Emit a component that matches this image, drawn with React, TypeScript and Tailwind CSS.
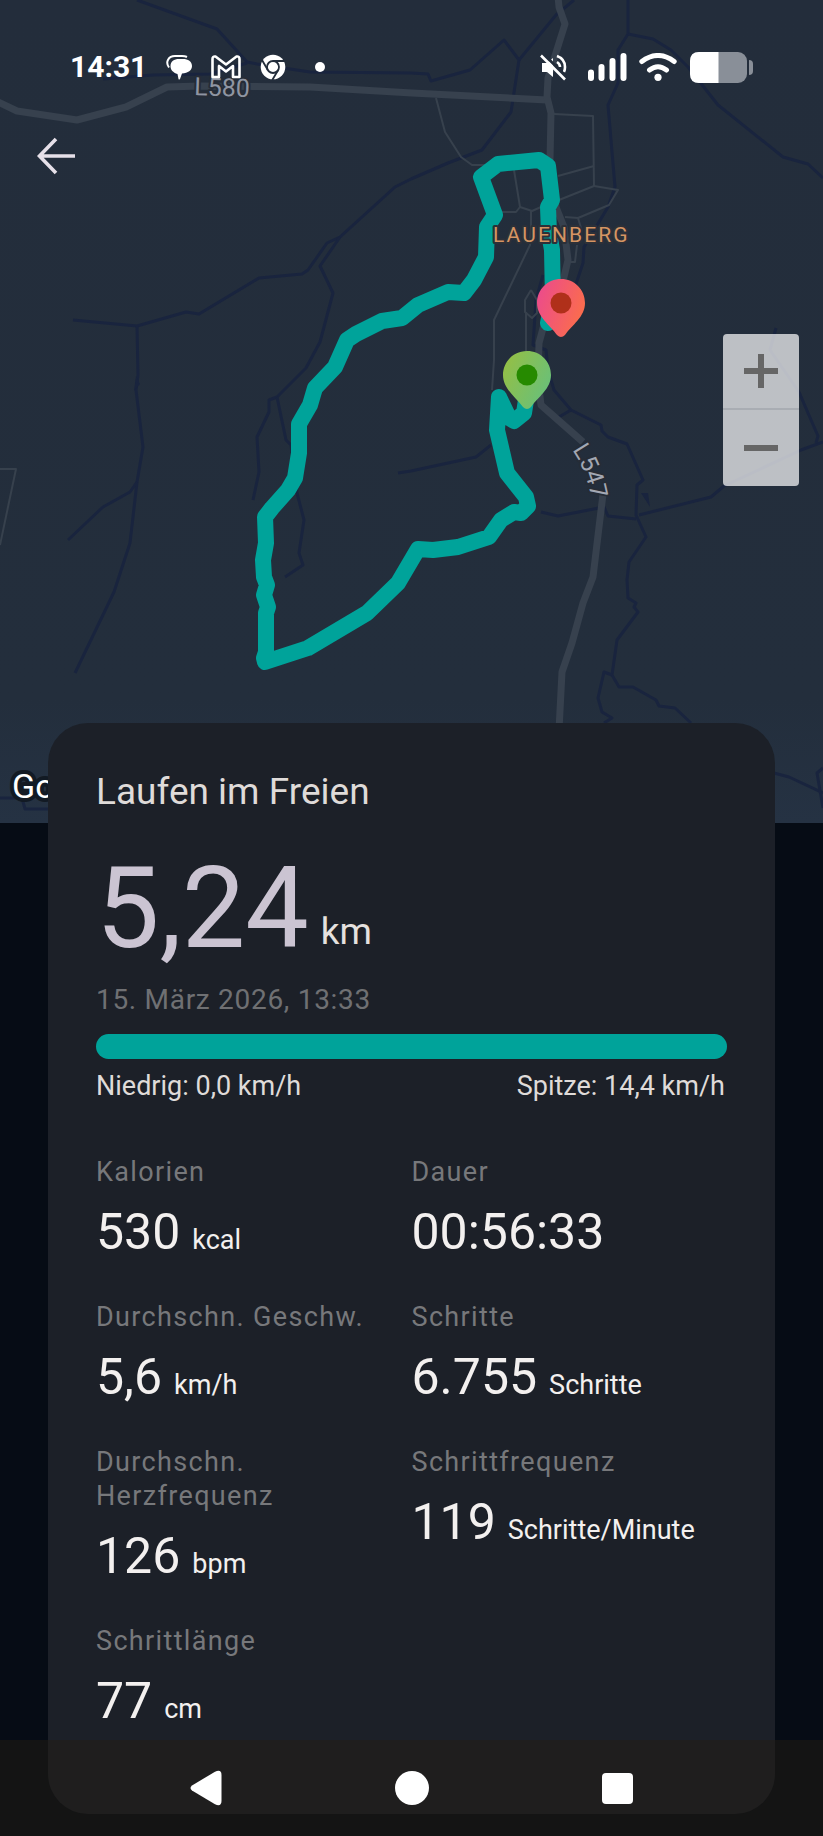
type Metric = {
  label: string;
  value: string;
  unit?: string;
};

const metrics: Metric[] = [
  { label: "Kalorien", value: "530", unit: "kcal" },
  { label: "Dauer", value: "00:56:33" },
  { label: "Durchschn. Geschw.", value: "5,6", unit: "km/h" },
  { label: "Schritte", value: "6.755", unit: "Schritte" },
  { label: "Durchschn. Herzfrequenz", value: "126", unit: "bpm" },
  { label: "Schrittfrequenz", value: "119", unit: "Schritte/Minute" },
  { label: "Schrittlänge", value: "77", unit: "cm" },
];

const waterways = [
  "137,0 217,29 247,62 257,64 310,72 411,73 428,74 431,81 470,70 504,40 519,60 511,112 482,150 448,163 411,179 395,187 340,237 327,243 308,270 302,274 259,278 199,314 186,312 137,326 73,320",
  "519,60 556,15 574,0",
  "103,79 153,75 210,74 247,63",
  "340,237 320,266 333,293 320,342 306,368 277,397 269,400 269,412 257,437 259,472 253,500",
  "277,397 286,440 291,445 297,493 304,520 299,553 303,565 285,577",
  "137,326 138,375 136,390 143,447 137,482 130,543 114,592 75,673",
  "137,482 130,492 103,507 68,540",
  "628,0 628,34 618,50 618,83 608,105 615,187 608,207 584,247 583,263 574,290",
  "628,34 653,39 671,50 688,67 718,105 783,157 808,164 823,178",
  "543,275 536,300 533,345 546,350 548,370 554,390 571,410 601,425 602,431 608,437 627,444 643,480 637,485 636,515 646,537 629,562 627,580 628,598 636,603 634,607 638,612 617,640 612,675 619,687 633,687 656,700 659,706 675,708 691,723",
  "612,675 604,672 598,698 602,712 612,718 604,723",
  "559,417 571,410",
  "541,512 558,516 604,507 608,516 636,519",
  "639,515 711,497 724,486 801,450 823,442",
  "776,328 770,350 799,392 808,413 818,436 816,443",
  "398,473 411,471 476,457 491,445",
  "774,773 789,777 823,793",
  "823,768 817,773 823,808",
  "0,798 22,798 25,809 60,809",
];

const mainRoads = [
  "-4,101 17,111 77,120 126,107 167,87 200,86 310,87 412,93 547,100",
  "558,-4 559,7 565,24 548,78 547,97 551,113 550,160 556,207 564,227 568,260 564,277 548,310 539,343 538,380 541,405 583,442",
  "603,494 593,577 583,603 572,643 562,672 559,730",
];

const sideRoads = [
  "436,98 445,132 461,157 472,165 491,165",
  "554,114 593,116 594,186 618,190 609,205 578,218 565,217",
  "558,176 594,166",
  "559,200 594,186",
  "514,170 520,207 516,212 501,212",
  "520,207 532,211 541,207",
  "531,211 531,227 530,245 494,320 494,360 492,390",
  "531,290 537,300 537,313 532,318 525,312 525,300 531,290",
  "526,312 526,360",
  "577,245 575,262 571,262",
  "578,218 581,228",
  "0,469 16,469 0,545",
];

const route =
  "526,400 524,413 514,421 509,418 499,397 497,430 507,473 526,497 528,506 521,513 514,512 501,520 489,537 458,547 433,550 418,549 398,583 367,613 308,648 265,662 264,658 266,652 266,613 268,607 264,595 267,585 264,577 263,560 266,543 265,517 272,508 288,490 295,478 299,453 299,424 310,405 315,388 335,367 347,340 356,334 382,321 402,318 418,305 448,292 464,293 474,280 486,257 487,227 495,215 481,177 498,164 539,160 548,166 552,200 548,207 549,233 552,250 553,300 548,323";

function MapPin({ x, y, fill, dot }: { x: number; y: number; fill: string; dot: string }) {
  return (
    <g transform={`translate(${x} ${y})`}>
      <path d="M0-24C13.500-24 24-13.500 24 0C24 14 11 22 4 32Q0 36-4 32C-11 22-24 14-24 0C-24-13.500-13.500-24 0-24Z" fill={fill} />
      <circle r="10.500" fill={dot} />
    </g>
  );
}

function RouteMap() {
  return (
    <svg viewBox="0 0 823 823" className="block aspect-square w-full" role="img" aria-label="Karte der Laufstrecke bei Lauenberg">
      <defs>
        <linearGradient id="ground" x1="0" y1="0" x2="0" y2="1">
          <stop offset="0" stopColor="#232d3b" />
          <stop offset="0.85" stopColor="#232e3c" />
          <stop offset="1" stopColor="#253243" />
        </linearGradient>
        <linearGradient id="pinEnd" x1="0" y1="0.3" x2="1" y2="0.7">
          <stop offset="0" stopColor="#ec4c8a" />
          <stop offset="1" stopColor="#fc6f48" />
        </linearGradient>
        <linearGradient id="pinStart" x1="0" y1="0.2" x2="1" y2="0.8">
          <stop offset="0" stopColor="#94bf45" />
          <stop offset="1" stopColor="#66c07d" />
        </linearGradient>
        <path id="l547" d="M572 450Q588 472 593 508" />
      </defs>
      <rect width="823" height="823" fill="url(#ground)" />

      <g fill="none" stroke="#19243e" strokeWidth="3" strokeLinejoin="round">
        {waterways.map((points) => (
          <polyline key={points} points={points} />
        ))}
      </g>
      <path d="M641 493H648L650 507ZM136 376L140 384L134 391Z" fill="#19243e" />
      <g fill="none" stroke="#37414d" strokeWidth="2" strokeLinejoin="round">
        {sideRoads.map((points) => (
          <polyline key={points} points={points} />
        ))}
      </g>
      <g fill="none" stroke="#37414e" strokeWidth="7" strokeLinejoin="round">
        {mainRoads.map((points) => (
          <polyline key={points} points={points} />
        ))}
      </g>

      <polyline points={route} fill="none" stroke="#00a39a" strokeWidth="16" strokeLinejoin="round" strokeLinecap="round" />

      <g className="font-['Roboto',sans-serif]" paintOrder="stroke" strokeLinejoin="round">
        <text x="194" y="95" transform="rotate(2 194 95)" fontSize="25" fill="#8f95a2" stroke="#262c36" strokeWidth="4">
          L580
        </text>
        <text fontSize="24" fill="#a3a8b3" stroke="#262c36" strokeWidth="4">
          <textPath href="#l547">L547</textPath>
        </text>
        <text x="493" y="242" fontSize="21" className="tracking-widest" fill="#d59563" stroke="#2c3038" strokeWidth="4">
          LAUENBERG
        </text>
        {/* the card covers the rest of the map attribution */}
        <text x="12" y="798" fontSize="34" fill="#ffffff" stroke="#121a24" strokeWidth="8">
          Go
        </text>
      </g>

      <MapPin x={561} y={303} fill="url(#pinEnd)" dot="#b0301a" />
      <MapPin x={527} y={375} fill="url(#pinStart)" dot="#268a00" />
    </svg>
  );
}

function StatusBar() {
  return (
    <div className="absolute inset-x-0 top-0 flex h-[134px] items-center justify-between px-[70px] text-white">
      <div className="flex items-center">
        <time className="w-24 text-[30px] leading-none font-bold">14:31</time>
        <svg width="26" height="26" viewBox="0 0 26 26" fill="currentColor" aria-hidden="true">
          <path d="M13 5H17C22 5 26 7.500 26 12C26 16.500 22 19 16 19.500L14 25Q13 26 12.500 25L11.500 20C7 18.500 4.500 16 4.500 12C4.500 7.500 8 5 13 5Z" />
          <path d="M3 13.500C-1 8 2.500 2 9 2H16Q19 2 21 3" fill="none" stroke="currentColor" strokeWidth="2" />
        </svg>
        <svg width="30" height="24" viewBox="0 0 30 24" fill="none" stroke="currentColor" strokeWidth="2.600" strokeLinejoin="round" className="ml-[19px]" aria-hidden="true">
          <path d="M1.500 22V4Q1.500 1 4.500 1.500L15 9.500L25.500 1.500Q28.500 1 28.500 4V22H22V11L15 16.500L8 11V22Z" />
        </svg>
        <svg width="26" height="26" viewBox="0 0 26 26" className="ml-[19px]" aria-hidden="true">
          <circle cx="13" cy="13" r="12.300" fill="currentColor" />
          <circle cx="13" cy="13" r="6" fill="none" stroke="#232d3b" strokeWidth="1.800" />
          <path d="M13 7H25M7.800 16L2 6M18.200 16L12.300 26" stroke="#232d3b" strokeWidth="1.800" />
        </svg>
        <span className="ml-[29px] h-[10px] w-[10px] rounded-full bg-white" />
      </div>

      <div className="flex items-center">
        <svg width="27" height="27" viewBox="0 0 27 27" fill="none" stroke="currentColor" aria-hidden="true">
          <path d="M2 9H7L13 4V23L7 18H2Z" fill="currentColor" stroke="none" />
          <path d="M17 2Q25 5 25 13Q25 16 24 18M17 8Q20 10 20 13" strokeWidth="2.600" />
          <path d="M3.500 0L27 23.500" stroke="#232d3b" strokeWidth="3" />
          <path d="M1 1.500L25 25.500" strokeWidth="2.600" />
        </svg>
        <svg width="40" height="28" viewBox="0 0 40 28" stroke="currentColor" strokeWidth="6" strokeLinecap="round" className="ml-[20px]" aria-hidden="true">
          <path d="M4 19.500V25M14.500 14V25M25.500 8V25M36.500 3V25" />
        </svg>
        <svg width="38" height="28" viewBox="0 0 38 28" fill="none" stroke="currentColor" strokeWidth="5" strokeLinecap="round" className="ml-[12px]" aria-hidden="true">
          <path d="M2.800 8.500Q19-3.500 35.200 8.500M10.500 17Q19 10.500 27.500 17" />
          <circle cx="19" cy="24.300" r="3.600" fill="currentColor" stroke="none" />
        </svg>
        <svg width="63" height="31" viewBox="0 0 63 31" className="ml-[13px]" aria-hidden="true">
          <rect width="57" height="31" rx="9" fill="#898f98" />
          <path d="M9 0H28.500V31H9Q0 31 0 22V9Q0 0 9 0Z" fill="currentColor" />
          <path d="M59 8Q63 8 63 12V19Q63 23 59 23Z" fill="#898f98" />
        </svg>
      </div>
    </div>
  );
}

function ZoomControls() {
  return (
    <div className="absolute top-[334px] right-6 flex w-[76px] flex-col overflow-hidden rounded-sm bg-white/70 text-[#666666]">
      <button type="button" aria-label="Vergrößern" className="flex h-[76px] items-center justify-center border-b-2 border-[#a9adb3]">
        <svg width="34" height="34" viewBox="0 0 34 34" stroke="currentColor" strokeWidth="6">
          <path d="M0 17H34M17 0V34" />
        </svg>
      </button>
      <button type="button" aria-label="Verkleinern" className="flex h-[76px] items-center justify-center">
        <svg width="34" height="34" viewBox="0 0 34 34" stroke="currentColor" strokeWidth="6">
          <path d="M0 17H34" />
        </svg>
      </button>
    </div>
  );
}

function MetricItem({ label, value, unit }: Metric) {
  return (
    <div>
      <dt className="text-[27px] leading-[34px] tracking-wider text-[#77787b]">{label}</dt>
      <dd className="mt-[15px] flex items-baseline gap-3 text-[50px] leading-[56px] text-[#f3f0ef]">
        {value}
        {unit && <span className="text-[27px] leading-[34px]">{unit}</span>}
      </dd>
    </div>
  );
}

function SummaryCard() {
  return (
    <section className="relative mx-12 -mt-[100px] mb-[22px] rounded-[40px] bg-[#1c2028] px-12 pt-12 pb-[85px]">
      <h1 className="text-[37px] leading-[42px] text-[#dfdbd9]">Laufen im Freien</h1>
      <p className="mt-9 flex items-end gap-3 text-[113px] leading-[120px] text-[#cbc4d2]">
        5,24
        <span className="pb-4 text-[37px] leading-[42px] text-[#e5e1df]">km</span>
      </p>
      <p className="mt-[14px] text-[28px] leading-[34px] tracking-wide text-[#6f7073]">15. März 2026, 13:33</p>
      <div className="mt-[17px] h-[25px] rounded-full bg-[#00a39a]" />
      <div className="mt-[10px] flex justify-between pr-[2px] text-[27px] leading-[34px] text-[#dfdbd9]">
        <span>Niedrig: 0,0 km/h</span>
        <span>Spitze: 14,4 km/h</span>
      </div>
      <dl className="mt-[52px] grid grid-cols-2 gap-y-10">
        {metrics.map((metric) => (
          <MetricItem key={metric.label} {...metric} />
        ))}
      </dl>
    </section>
  );
}

function NavigationBar() {
  return (
    <nav className="absolute inset-x-0 bottom-0 flex h-24 justify-center bg-[#221c13]/50 text-white">
      <div className="grid w-3/4 grid-cols-3">
        <button type="button" aria-label="Zurück" className="flex items-center justify-center">
          <svg width="32" height="36" viewBox="0 0 32 36" fill="currentColor">
            <path d="M2 15.500L25 1.700Q31.500-1 31.500 5V31Q31.500 37 25 34.300L2 20.500Q-1 18 2 15.500Z" />
          </svg>
        </button>
        <button type="button" aria-label="Startbildschirm" className="flex items-center justify-center">
          <span className="h-[34px] w-[34px] rounded-full bg-white" />
        </button>
        <button type="button" aria-label="Letzte Apps" className="flex items-center justify-center">
          <span className="h-[31px] w-[31px] rounded-sm bg-white" />
        </button>
      </div>
    </nav>
  );
}

export default function App() {
  return (
    <main className="relative flow-root min-h-screen bg-[#060c15] font-['Roboto',sans-serif]">
      <header className="relative">
        <RouteMap />
        <StatusBar />
        <button type="button" aria-label="Zurück" className="absolute top-[132px] left-8 flex h-12 w-12 items-center justify-center text-[#e6e0e9]">
          <svg width="38" height="38" viewBox="0 0 38 38" fill="none" stroke="currentColor" strokeWidth="3.600">
            <path d="M38 19H3M19 2L2.500 19L19 36" />
          </svg>
        </button>
        <ZoomControls />
      </header>
      <SummaryCard />
      <NavigationBar />
    </main>
  );
}
